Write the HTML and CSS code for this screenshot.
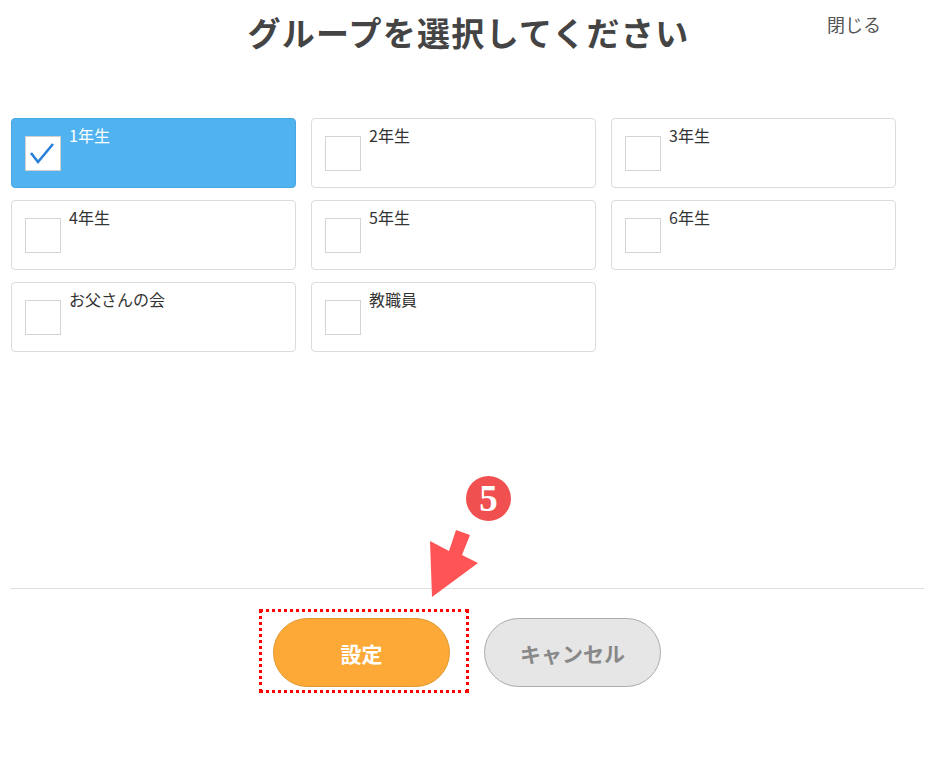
FILE: index.html
```html
<!DOCTYPE html>
<html lang="ja">
<head>
<meta charset="utf-8">
<link rel="stylesheet" href="styles.css">
</head>
<body>
<div class="page">
  <header class="header">
    <div></div>
    <h1 class="title">グループを選択してください</h1>
    <div class="close">閉じる</div>
  </header>

  <div class="groups">
    <label class="card selected">
      <span class="box"><svg width="36" height="35" viewBox="0 0 36 35"><polyline points="6,17 13,26 28,8" fill="none" stroke="#2a7fd9" stroke-width="2.6" stroke-linejoin="miter"/></svg></span>
      <span class="name">1年生</span>
    </label>
    <label class="card"><span class="box"></span><span class="name">2年生</span></label>
    <label class="card"><span class="box"></span><span class="name">3年生</span></label>
    <label class="card"><span class="box"></span><span class="name">4年生</span></label>
    <label class="card"><span class="box"></span><span class="name">5年生</span></label>
    <label class="card"><span class="box"></span><span class="name">6年生</span></label>
    <label class="card"><span class="box"></span><span class="name">お父さんの会</span></label>
    <label class="card"><span class="box"></span><span class="name">教職員</span></label>
  </div>

  <footer class="footer">
    <button class="btn ok">設定</button>
    <button class="btn cancel">キャンセル</button>
  </footer>

  <div class="mark-box"></div>
  <div class="step-num">5</div>
  <svg class="arrow" width="60" height="75" viewBox="425 527 60 75">
    <polygon points="432,597 430,541 449,551 456,530 470,535 462,555 478,563" fill="#fe5455"/>
  </svg>
</div>
</body>
</html>
```

FILE: styles.css
```css
* { box-sizing: border-box; }
html, body { margin: 0; padding: 0; background: #fff; }
body {
  font-family: "Noto Sans CJK JP", "Noto Sans", sans-serif;
  color: #333;
}
.page {
  position: relative;
  width: 937px;
  height: 759px;
}
.header {
  display: grid;
  grid-template-columns: 1fr auto 1fr;
  padding-top: 12px;
}
.title {
  margin: 0;
  font-size: 33px;
  line-height: 40px;
  font-weight: 700;
  color: #444;
  letter-spacing: 1.3px;
}
.close {
  justify-self: end;
  margin-right: 56px;
  font-size: 18px;
  line-height: 24px;
  color: #555;
}
.groups {
  display: grid;
  grid-template-columns: repeat(3, 285px);
  grid-auto-rows: 70px;
  column-gap: 15px;
  row-gap: 12px;
  margin-top: 66px;
  padding-left: 11px;
}
.card {
  display: flex;
  align-items: flex-start;
  border: 1px solid #dcdcdc;
  border-radius: 4px;
  background: #fff;
}
.card.selected {
  background: #51b2f0;
  border-color: #4aa6e2;
}
.box {
  width: 36px;
  height: 35px;
  margin-top: 17px;
  margin-left: 13px;
  border: 1px solid #d4d4d4;
  background: #fff;
  display: block;
}
.box svg { display: block; margin: -1px; }
.selected .box { border-color: #cfcfcf; }
.name {
  margin-left: 8px;
  padding-top: 6px;
  font-size: 16px;
  line-height: 20px;
  color: #333;
}
.selected .name { color: #fff; }
.footer {
  margin: 236px 13px 0 10px;
  border-top: 1px solid #dedede;
  padding-top: 29px;
  display: flex;
  justify-content: center;
  gap: 34px;
}
.btn {
  width: 177px;
  height: 69px;
  border-radius: 35px;
  font-family: "Noto Sans CJK JP", sans-serif;
  font-size: 21px;
  font-weight: 700;
  padding: 0;
}
.btn.ok {
  background: #fca937;
  border: 1px solid #e0992e;
  color: #fff;
}
.btn.cancel {
  background: #e6e6e6;
  border: 1px solid #ababab;
  color: #888;
}
.mark-box {
  position: absolute;
  left: 259px;
  top: 609px;
  width: 210px;
  height: 84px;
  border: 3px dotted #f00;
}
.step-num {
  position: absolute;
  left: 466px;
  top: 476px;
  width: 45px;
  height: 45px;
  border-radius: 50%;
  background: #f05050;
  color: #fff;
  font-family: "Liberation Serif", serif;
  font-weight: 700;
  font-size: 37px;
  line-height: 45px;
  text-align: center;
}
.arrow {
  position: absolute;
  left: 425px;
  top: 527px;
}
```
